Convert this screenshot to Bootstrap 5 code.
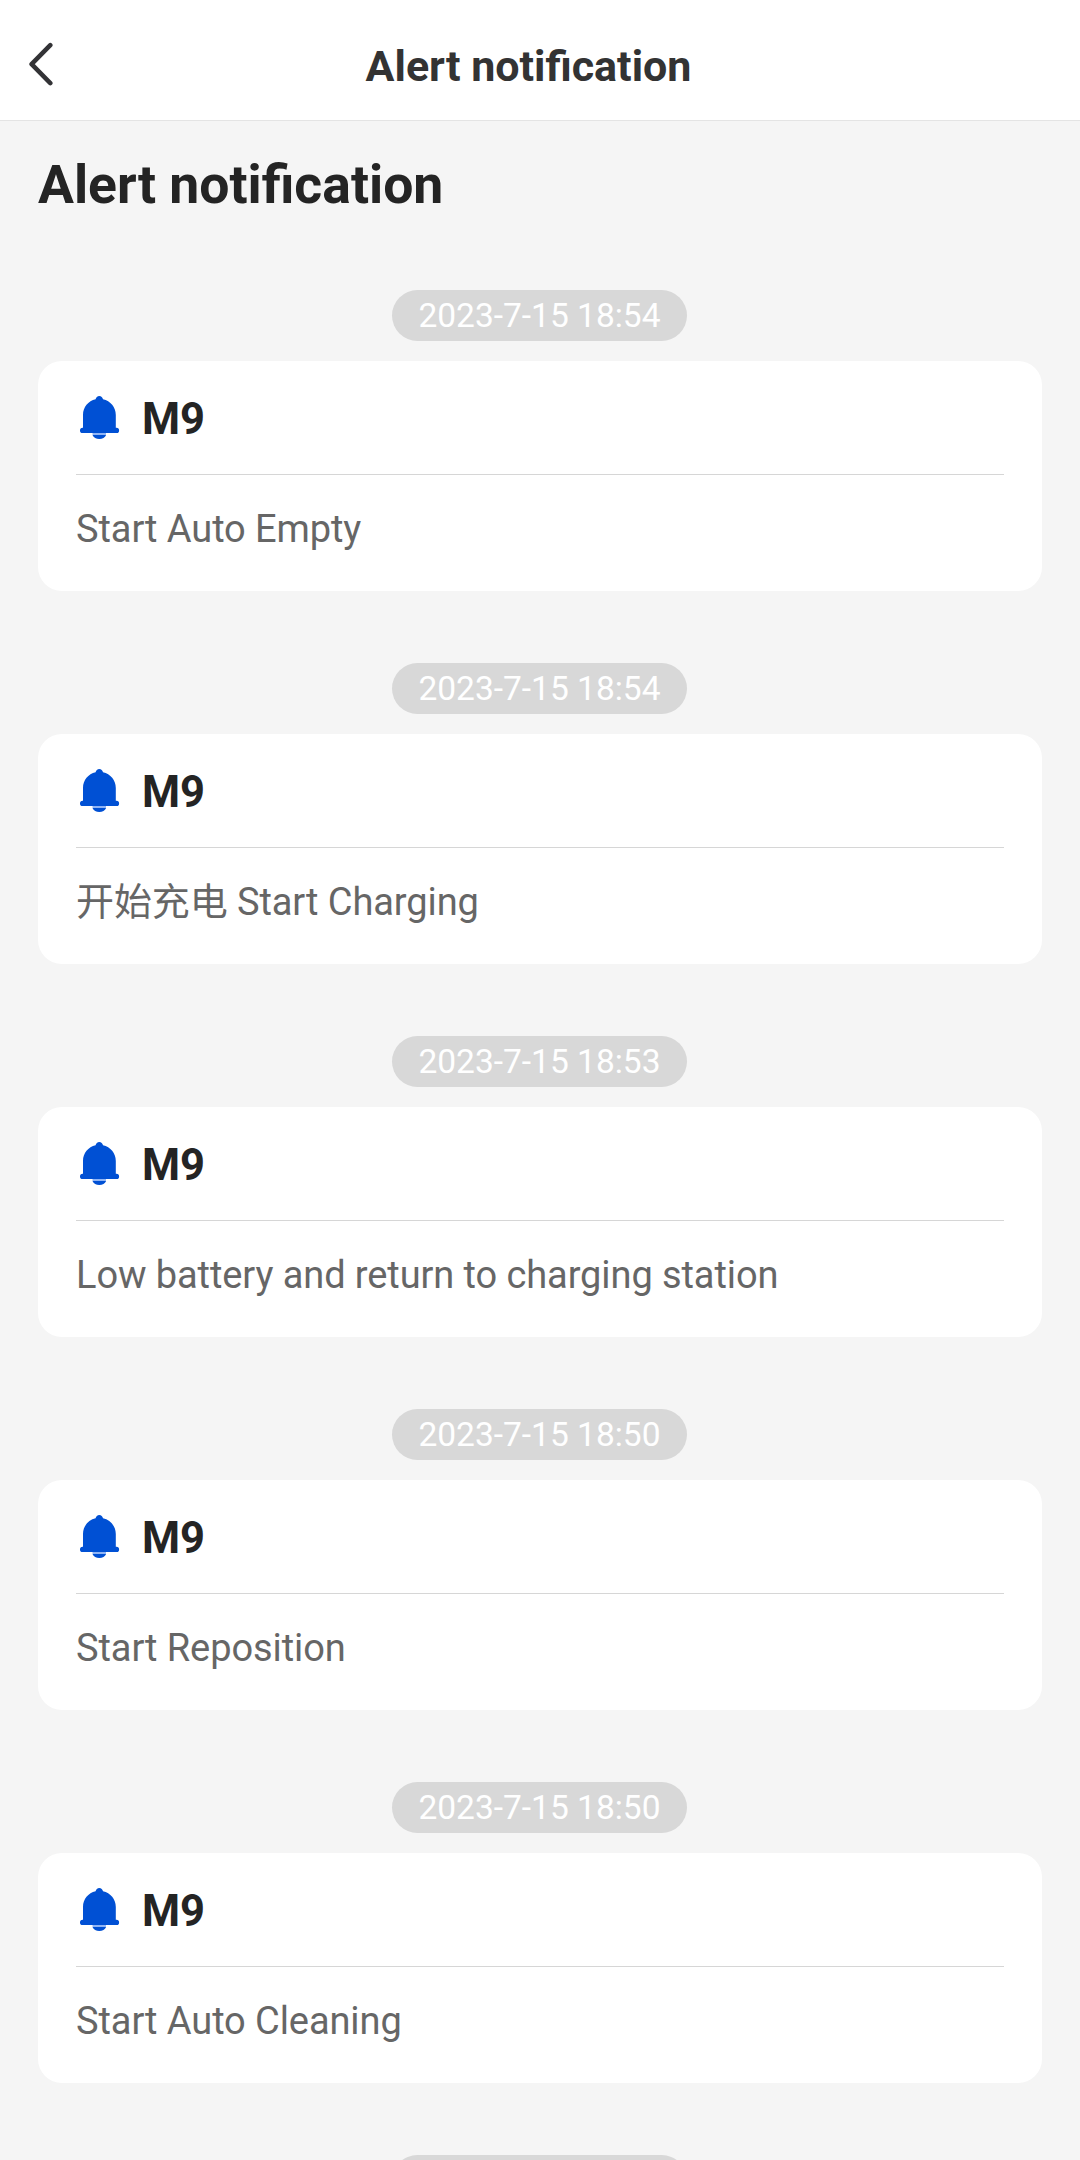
<!DOCTYPE html>
<html lang="en">
<head>
<meta charset="utf-8">
<meta name="viewport" content="width=device-width, initial-scale=1">
<title>Alert notification</title>
<link href="https://cdn.jsdelivr.net/npm/bootstrap@5.3.0/dist/css/bootstrap.min.css" rel="stylesheet">
<style>
  body { background: #f5f5f5; font-family: Roboto, "Noto Sans CJK SC", sans-serif; color: #242424; height: 2160px; overflow: hidden; }
  .top-bar { height: 121px; border-bottom: 1px solid #e4e4e4; padding: 0 29px; }
  .back-btn { width: 48px; height: 48px; margin-top: 11px; }
  .bar-title { font-size: 43px; line-height: 50px; color: #333; padding: 11px 0 0; margin-right: 71px; }
  .page-title { font-size: 53.5px; line-height: 64px; margin: 32px 38px 73px; }
  .alert-list { gap: 72px; padding: 0 39px 0 38px; }
  .alert-item { gap: 20px; }
  .time-pill { width: 295px; height: 51px; background: #d8d8d8; font-size: 33.5px; line-height: 51px; }
  .alert-card { height: 230px; border-radius: 24px; padding: 0 38px; margin-right: -1px; }
  .alert-head { height: 114px; border-bottom: 1px solid #d6d6d6; }
  .bell { width: 46px; height: 46px; margin: 0 20px 1px 0; }
  .device { font-size: 43.5px; line-height: 50px; padding-top: 4px; }
  .alert-text { font-size: 38px; letter-spacing: -.09px; line-height: 46px; color: #666; padding-top: 31px; }
</style>
</head>
<body>
<svg class="d-none" xmlns="http://www.w3.org/2000/svg">
  <symbol id="bell" viewBox="0 0 46 46">
    <path fill="#0050d4" d="M19.6 5.3C20 3.3 21.4 2 23.3 2S26.600 3.300 27 5.300C34.500 7 39.800 13.200 39.800 21V33.800H40.500A2.600 2.600 0 0 1 40.500 39H6.600A2.600 2.600 0 0 1 6.600 33.800H7V21C7 13.200 12.200 7 19.600 5.300Z"/>
    <path fill="#8fb4f5" d="M16.500 39H30V41H16.500Z"/>
    <path fill="#0050d4" d="M16.500 41H30.100C29 43.500 26.500 45 23.300 45S17.600 43.500 16.500 41Z"/>
  </symbol>
</svg>

<header class="top-bar bg-white d-flex align-items-center">
  <button class="back-btn btn p-0 border-0 d-flex" aria-label="Back">
    <svg width="48" height="48" viewBox="0 0 48 48" fill="none" stroke="#333336" stroke-width="4.500" stroke-linecap="round" stroke-linejoin="round"><path d="M21.300 3.200 2.600 22.200 21.300 41.200"/></svg>
  </button>
  <div class="bar-title flex-grow-1 text-center fw-bold">Alert notification</div>
</header>

<main>
  <h1 class="page-title fw-bold">Alert notification</h1>
  <div class="alert-list d-flex flex-column">
    <section class="alert-item d-flex flex-column">
      <time class="time-pill rounded-pill text-white text-center align-self-center">2023-7-15 18:54</time>
      <article class="alert-card bg-white">
        <div class="alert-head d-flex align-items-center"><svg class="bell"><use href="#bell"/></svg><span class="device fw-bold">M9</span></div>
        <p class="alert-text mb-0">Start Auto Empty</p>
      </article>
    </section>
    <section class="alert-item d-flex flex-column">
      <time class="time-pill rounded-pill text-white text-center align-self-center">2023-7-15 18:54</time>
      <article class="alert-card bg-white">
        <div class="alert-head d-flex align-items-center"><svg class="bell"><use href="#bell"/></svg><span class="device fw-bold">M9</span></div>
        <p class="alert-text mb-0">开始充电 Start Charging</p>
      </article>
    </section>
    <section class="alert-item d-flex flex-column">
      <time class="time-pill rounded-pill text-white text-center align-self-center">2023-7-15 18:53</time>
      <article class="alert-card bg-white">
        <div class="alert-head d-flex align-items-center"><svg class="bell"><use href="#bell"/></svg><span class="device fw-bold">M9</span></div>
        <p class="alert-text mb-0">Low battery and return to charging station</p>
      </article>
    </section>
    <section class="alert-item d-flex flex-column">
      <time class="time-pill rounded-pill text-white text-center align-self-center">2023-7-15 18:50</time>
      <article class="alert-card bg-white">
        <div class="alert-head d-flex align-items-center"><svg class="bell"><use href="#bell"/></svg><span class="device fw-bold">M9</span></div>
        <p class="alert-text mb-0">Start Reposition</p>
      </article>
    </section>
    <section class="alert-item d-flex flex-column">
      <time class="time-pill rounded-pill text-white text-center align-self-center">2023-7-15 18:50</time>
      <article class="alert-card bg-white">
        <div class="alert-head d-flex align-items-center"><svg class="bell"><use href="#bell"/></svg><span class="device fw-bold">M9</span></div>
        <p class="alert-text mb-0">Start Auto Cleaning</p>
      </article>
    </section>
    <div class="time-pill rounded-pill align-self-center"></div>
  </div>
</main>
<script src="https://cdn.jsdelivr.net/npm/bootstrap@5.3.0/dist/js/bootstrap.bundle.min.js"></script>
</body>
</html>
